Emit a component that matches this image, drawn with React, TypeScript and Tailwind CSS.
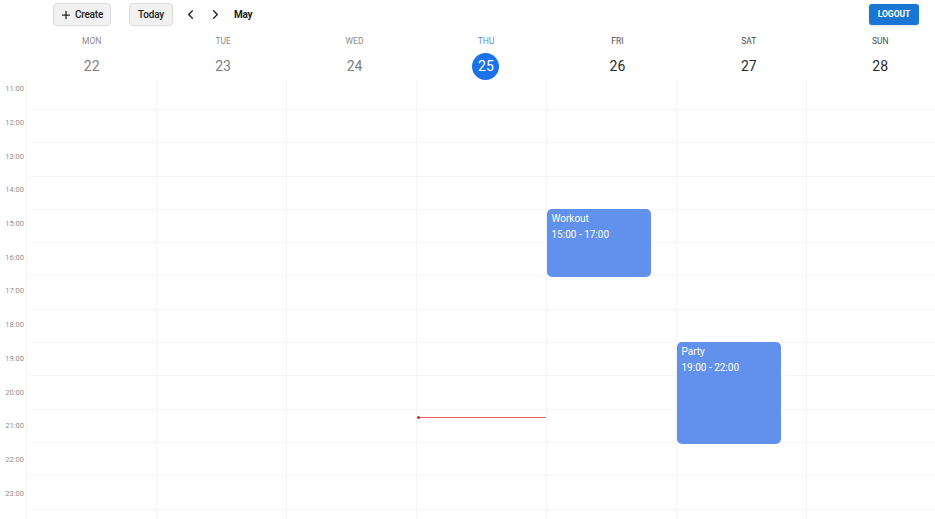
import { ChevronLeft, ChevronRight, Plus } from "lucide-react"

const days = [
  { name: "MON", date: 22, past: true },
  { name: "TUE", date: 23, past: true },
  { name: "WED", date: 24, past: true },
  { name: "THU", date: 25, today: true },
  { name: "FRI", date: 26 },
  { name: "SAT", date: 27 },
  { name: "SUN", date: 28 },
]

const hours = ["11:00", "12:00", "13:00", "14:00", "15:00", "16:00", "17:00", "18:00", "19:00", "20:00", "21:00", "22:00", "23:00"]

export default function App() {
  return (
    <div className="h-[519px] w-[935px] overflow-hidden bg-white font-['Roboto',sans-serif] text-[#212121]">
      {/* Toolbar */}
      <div className="flex h-[29px] items-center pl-[53px] pr-4">
        <button className="flex h-[23px] w-[58px] items-center justify-center gap-[3px] rounded border border-[#dcdcdc] bg-[#f1f1f1] pr-[1px] text-[10px] font-medium tracking-[-0.2px]">
          <Plus size={12} strokeWidth={2.5} />
          Create
        </button>
        <button className="ml-[18px] flex h-[23px] w-[44px] items-center justify-center rounded border border-[#dcdcdc] bg-[#f1f1f1] text-[10px] font-medium tracking-[-0.2px]">
          Today
        </button>
        <ChevronLeft className="ml-[10px]" size={15} strokeWidth={2} />
        <ChevronRight className="ml-[10px]" size={15} strokeWidth={2} />
        <span className="ml-[11px] text-[10px] font-bold tracking-[-0.3px]">May</span>
        <button className="ml-auto h-[21px] w-[50px] rounded-[3px] bg-[#1976d2] text-[8.5px] font-bold text-white shadow">
          LOGOUT
        </button>
      </div>

      {/* Day headers */}
      <div className="ml-[26px] flex h-[51px] w-[920px]">
        {days.map((day) => (
          <div key={day.name} className="flex flex-1 flex-col items-center">
            <span
              className={`mt-[7px] text-[8.5px] leading-[11px] ${
                day.today ? "text-[#5b8def]" : day.past ? "text-[#8c8c8c]" : "text-[#4a4a4a]"
              }`}
            >
              {day.name}
            </span>
            <span
              className={`mt-[6px] flex h-[27px] w-[27px] items-center justify-center rounded-full text-[14px] ${
                day.today ? "bg-[#1a73e8] text-white" : day.past ? "text-[#808080]" : "text-[#2b2b2b]"
              }`}
            >
              {day.date}
            </span>
          </div>
        ))}
      </div>

      {/* Week grid */}
      <div className="flex h-[439px] overflow-hidden">
        <div className="w-[26px] shrink-0">
          {hours.map((hour, i) => (
            <div
              key={hour}
              className={`${i === 0 ? "h-[30px] pt-[4px]" : "h-[33.7px] pt-[8px]"} pr-[2px] text-right text-[7.5px] leading-[10px] text-[#8f8f8f]`}
            >
              {hour}
            </div>
          ))}
        </div>
        {days.map((day) => (
          <div key={day.name} className="relative w-[130px] shrink-0 border-l border-[#f5f5f5]">
            {hours.map((hour, i) => (
              <div key={hour} className={`${i === 0 ? "h-[30px]" : "h-[33.3px]"} border-b border-[#f5f5f5]`} />
            ))}
            {day.name === "THU" && (
              <div className="absolute left-0 right-0 top-[337px] h-px bg-[#f06060]">
                <div className="absolute left-0 top-[-1px] h-[3px] w-[3px] rounded-full bg-[#d32f2f]" />
              </div>
            )}
            {day.name === "FRI" && (
              <div className="absolute left-0 top-[129px] h-[68px] w-[104px] rounded-[5px] bg-[#6191ec] px-[4.5px] pt-[2px] text-[10px] leading-[15.5px] text-white">
                <div>Workout</div>
                <div>15:00 - 17:00</div>
              </div>
            )}
            {day.name === "SAT" && (
              <div className="absolute left-0 top-[262px] h-[102px] w-[104px] rounded-[5px] bg-[#6191ec] px-[4.5px] pt-[2px] text-[10px] leading-[15.5px] text-white">
                <div>Party</div>
                <div>19:00 - 22:00</div>
              </div>
            )}
          </div>
        ))}
      </div>
    </div>
  )
}
